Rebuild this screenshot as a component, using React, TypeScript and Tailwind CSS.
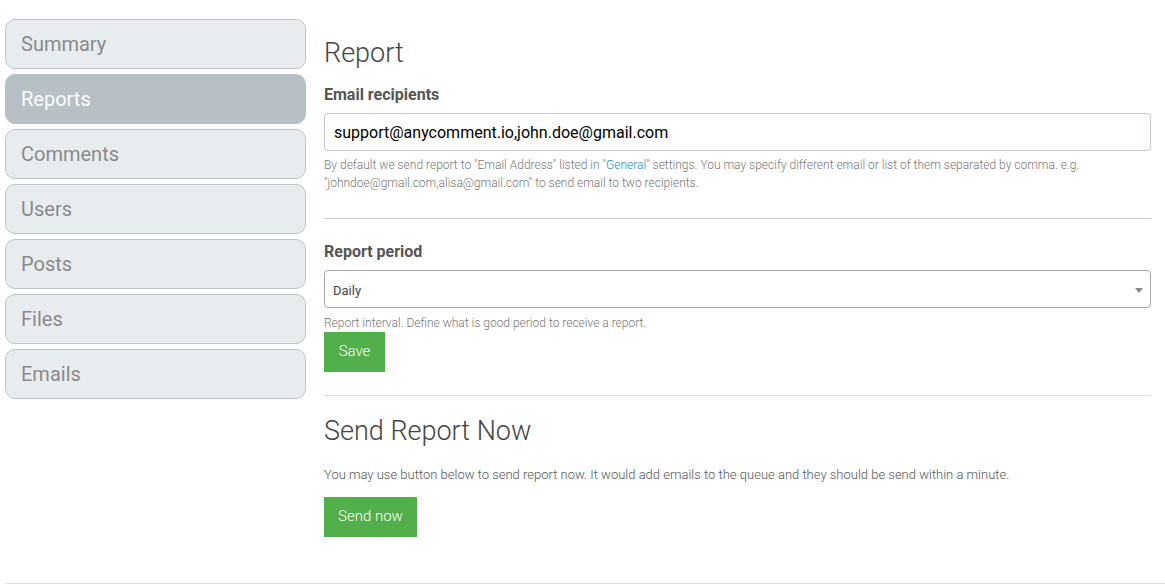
import React from "react";

const items = ["Summary", "Reports", "Comments", "Users", "Posts", "Files", "Emails"];

export default function App() {
  return (
    <div className="w-[1165px] h-[584px] bg-white overflow-hidden" style={{ fontFamily: "Roboto, 'Liberation Sans', sans-serif" }}>
      <div className="ml-[5px] flex border-b border-[#dddddd] h-[584px]">
        <div className="w-[301px] pt-[19px] flex flex-col gap-[5px] shrink-0">
          {items.map((it) => {
            const active = it === "Reports";
            return (
              <div
                key={it}
                className={
                  active
                    ? "h-[50px] rounded-[10px] border border-[#b6c0c5] bg-[#b6c0c5] text-white text-[20px] flex items-center pl-[15px]"
                    : "h-[50px] rounded-[10px] border border-[#bcc6ca] bg-[#e7ecee] text-[#8a8a8a] text-[20px] flex items-center pl-[15px]"
                }
              >
                {it}
              </div>
            );
          })}
        </div>
        <div className="ml-[18px] w-[827px] pt-[37px]">
          <h2 className="text-[27px] leading-[32px] font-light text-[#444]">Report</h2>
          <div className="mt-[14px] text-[16px] leading-[24px] font-bold text-[#555]">Email recipients</div>
          <div className="mt-[6px] h-[38px] border border-[#c4c9cc] rounded-[4px] flex items-center pl-[9px] pt-[1px] text-[16px] text-black">
            support@anycomment.io,john.doe@gmail.com
          </div>
          <p className="mt-[5px] text-[12px] leading-[18px] font-light text-[#777]">
            By default we send report to "Email Address" listed in "<span className="text-[#2a8fc6]">General</span>" settings. You may specify different email or list of them separated by comma. e.g. "johndoe@gmail.com,alisa@gmail.com" to send email to two recipients.
          </p>
          <div className="mt-[26px] border-t border-[#cccccc]" />
          <div className="mt-[21px] text-[16px] leading-[24px] font-bold text-[#555]">Report period</div>
          <div className="mt-[6px] h-[38px] border border-[#a9a9a9] rounded-[4px] flex items-center justify-between pl-[8px] pr-[7px] pt-[3px] text-[13px] text-[#444]">
            <span>Daily</span>
            <svg width="8" height="5" viewBox="0 0 8 5">
              <path d="M0 0 L8 0 L4 5 Z" fill="#888" />
            </svg>
          </div>
          <p className="mt-[6px] text-[12px] leading-[18px] font-light text-[#777]">Report interval. Define what is good period to receive a report.</p>
          <button className="mt-0 w-[61px] h-[40px] bg-[#52b04c] text-white text-[15px] font-light pb-[2px]">Save</button>
          <div className="mt-[23px] border-t border-[#dddddd]" />
          <h2 className="mt-[19px] text-[27px] leading-[32px] font-light text-[#444]">Send Report Now</h2>
          <p className="mt-[18px] text-[13px] leading-[20px] font-light text-[#555]">
            You may use button below to send report now. It would add emails to the queue and they should be send within a minute.
          </p>
          <button className="mt-[12px] w-[93px] h-[40px] bg-[#52b04c] text-white text-[15px] font-light pb-[2px]">Send now</button>
        </div>
      </div>
    </div>
  );
}
